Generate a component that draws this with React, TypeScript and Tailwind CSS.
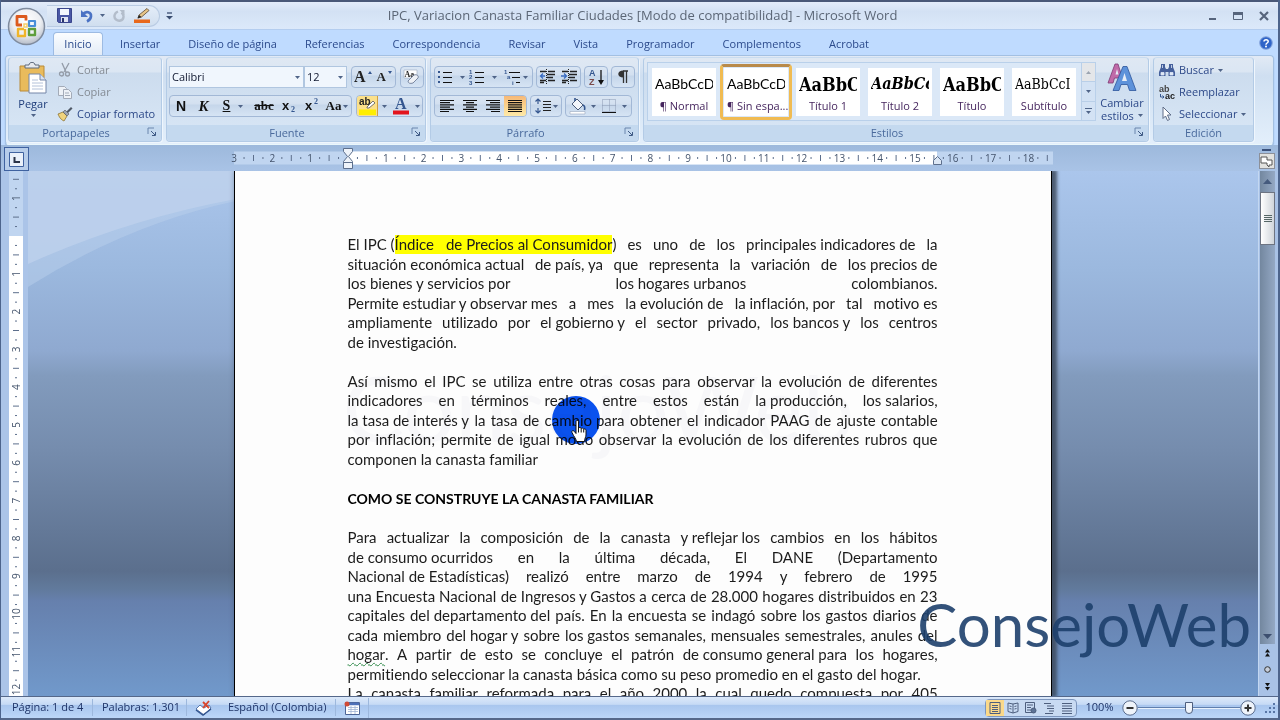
import React from "react";

type Kids = { children?: React.ReactNode };

const TABS = [
  "Insertar",
  "Diseño de página",
  "Referencias",
  "Correspondencia",
  "Revisar",
  "Vista",
  "Programador",
  "Complementos",
  "Acrobat",
];

const STYLES = [
  { name: "¶ Normal", sample: "AaBbCcDc", look: "font-[Lato] text-sm", on: false },
  { name: "¶ Sin espa...", sample: "AaBbCcDc", look: "font-[Lato] text-sm", on: true },
  { name: "Título 1", sample: "AaBbC", look: "font-[DejaVu_Serif_Condensed,DejaVu_Serif] font-bold text-[18px]", on: false },
  { name: "Título 2", sample: "AaBbCc", look: "font-[DejaVu_Serif_Condensed,DejaVu_Serif] font-bold italic text-base", on: false },
  { name: "Título", sample: "AaBbC", look: "font-[DejaVu_Serif_Condensed,DejaVu_Serif] font-bold text-[18px]", on: false },
  { name: "Subtítulo", sample: "AaBbCcI", look: "font-[DejaVu_Serif_Condensed,DejaVu_Serif] text-sm", on: false },
];

// Each string is one justified line; "|" marks the stretchable gaps.
const PARAGRAPH_1 = [
  "situación económica actual|de país, ya|que|representa|la|variación|de|los precios de",
  "los bienes y servicios por|los hogares urbanos|colombianos.",
  "Permite estudiar y observar mes|a|mes|la evolución de|la inflación, por|tal|motivo es",
  "ampliamente|utilizado|por|el gobierno y|el|sector|privado,|los bancos y|los|centros",
];
const PARAGRAPH_2 = [
  "Así|mismo|el|IPC|se|utiliza|entre|otras|cosas|para|observar|la|evolución|de|diferentes",
  "indicadores|en|términos|reales,|entre|estos|están|la producción,|los salarios,",
  "la tasa de interés y|la|tasa|de|cambio para|obtener|el|indicador|PAAG|de|ajuste|contable",
  "por|inflación;|permite|de|igual|modo|observar|la|evolución|de|los|diferentes|rubros|que",
];
const PARAGRAPH_3 = [
  "Para|actualizar|la|composición|de|la|canasta|y reflejar los|cambios|en|los|hábitos",
  "de consumo ocurridos|en|la|última|década,|El|DANE|(Departamento",
  "Nacional de Estadísticas)|realizó|entre|marzo|de|1994|y|febrero|de|1995",
  "una Encuesta Nacional|de Ingresos y Gastos a|cerca|de|28.000|hogares|distribuidos|en|23",
  "capitales|del departamento del|país.|En|la|encuesta|se|indagó|sobre|los|gastos|diarios|de",
  "cada|miembro|del hogar y|sobre|los gastos|semanales,|mensuales|semestrales,|anules|del",
];

function Chunks({ text }: { text: string }) {
  return (
    <>
      {text.split("|").map((c, i) => (
        <React.Fragment key={i}>
          {i > 0 && " "}
          <span className="inline-block whitespace-nowrap">{c}</span>
        </React.Fragment>
      ))}
    </>
  );
}

function Line({ children }: Kids) {
  return <span className="block whitespace-normal [text-align-last:justify]">{children}</span>;
}

function Caret({ className = "" }: { className?: string }) {
  return (
    <svg width="5" height="3" viewBox="0 0 5 3" className={`shrink-0 ${className}`} aria-hidden="true">
      <path d="M0 0h5L2.5 3z" fill="#4f6488" />
    </svg>
  );
}

function Launcher({ label }: { label: string }) {
  return (
    <button aria-label={label} className="absolute right-1 top-0.5">
      <svg width="10" height="10" viewBox="0 0 10 10" fill="none">
        <path d="M1 7V1h6" stroke="#6b86ad" />
        <path d="M4 4l4 4M8.500 5v3.500H5" stroke="#3f5a85" />
      </svg>
    </button>
  );
}

function Group({ title, width, launcher = true, children }: Kids & { title: string; width: string; launcher?: boolean }) {
  return (
    <section
      aria-label={title}
      className={`${width} flex shrink-0 flex-col overflow-hidden rounded-sm border border-[#b3cbe6] border-t-[#c9dcf0] bg-[linear-gradient(#dfe8f3_0,#dbe6f3_14px,#ccdcee_15px,#d9e7f6_100%)] shadow-[1px_1px_0_#eff6fd]`}
    >
      <div className="flex h-[68px]">{children}</div>
      <div className={`relative flex flex-1 items-center justify-center bg-[#c4d9ef] text-[#4a6a9c] ${launcher ? "pr-[18px]" : ""}`}>
        {title}
        {launcher && <Launcher label={`Opciones de ${title}`} />}
      </div>
    </section>
  );
}

function Box({ children, className = "" }: Kids & { className?: string }) {
  return (
    <div
      className={`flex h-[22px] items-stretch overflow-hidden rounded-sm border border-[#a2b8d6] bg-[linear-gradient(#d9e5f3_0,#d3e0f0_40%,#c5d6ea_45%,#d6e4f4_100%)] ${className}`}
    >
      {children}
    </div>
  );
}

function Tool({ label, children, className = "flex-1" }: Kids & { label: string; className?: string }) {
  return (
    <button aria-label={label} title={label} className={`flex items-center justify-center gap-0.5 ${className}`}>
      {children}
    </button>
  );
}

function Combo({ label, value, width }: { label: string; value: string; width: string }) {
  return (
    <label className={`relative flex ${width}`}>
      <span className="sr-only">{label}</span>
      <select
        className="h-[22px] w-full appearance-none border border-[#b0c6e0] bg-[#f0f6fd] px-0.5 text-[11px] text-[#101830]"
        defaultValue={value}
      >
        <option>{value}</option>
      </select>
      <Caret className="pointer-events-none absolute right-1 top-2.5" />
    </label>
  );
}

function AlignIcon({ rows, xs }: { rows: number[]; xs: number[] }) {
  return (
    <svg width="16" height="14" viewBox="0 0 16 14" aria-hidden="true">
      {rows.map((w, i) => (
        <path key={i} d={`M${xs[i]} ${1.5 + i * 2.2}h${w}`} stroke="#111" strokeWidth="1.2" />
      ))}
    </svg>
  );
}

function ListIcon({ kind }: { kind: "bullet" | "number" | "multi" }) {
  return (
    <svg width="17" height="16" viewBox="0 0 17 16" aria-hidden="true">
      {kind === "bullet" && (
        <>
          <path d="M6 3.500h9M6 8.500h9M6 13.500h9" stroke="#111" />
          <path d="M1 2h2v2H1zM1 7h2v2H1zM1 12h2v2H1z" fill="#34568f" />
        </>
      )}
      {kind === "number" && (
        <>
          <path d="M6 3.500h9M6 8.500h9M6 13.500h9" stroke="#111" />
          <g fill="#34568f" fontSize="6" fontWeight="bold" fontFamily="Liberation Sans">
            <text x="0" y="5">1</text>
            <text x="0" y="10">2</text>
            <text x="0" y="15.500">3</text>
          </g>
        </>
      )}
      {kind === "multi" && (
        <>
          <path d="M5 3.500h11M8 8.500h8M12 13.500h4" stroke="#111" />
          <g fill="#34568f" fontSize="6" fontWeight="bold" fontFamily="Liberation Sans">
            <text x="0" y="5">1</text>
            <text x="3" y="10">a</text>
            <text x="8" y="15.500">i</text>
          </g>
        </>
      )}
    </svg>
  );
}

function IndentIcon({ out }: { out?: boolean }) {
  return (
    <svg width="17" height="16" viewBox="0 0 17 16" aria-hidden="true">
      <path d="M1 2.500h6M9 2.500h7M8 5.500h8M8 8.500h6M1 11.500h6M9 11.500h7M1 13.500h4" stroke="#222" strokeWidth="1.300" />
      <path d="M7.500 0v16" stroke="#222" strokeDasharray="1 1" />
      <path d={out ? "M6 7H2M4 4.500L1.500 7 4 9.500" : "M0 7h5M3 4.500L5.500 7 3 9.500"} stroke="#3a6cc0" strokeWidth="1.300" fill="none" />
    </svg>
  );
}

function TitleBar() {
  return (
    <header className="relative flex h-[30px] shrink-0 items-center border-b border-[#b4cdef] border-t-2 border-t-[#4a5878] bg-[linear-gradient(#e3ecfa_0,#d3e1f4_35%,#dce9fa_100%)] pl-[46px]">
      <div className="flex h-[22px] items-center gap-2 rounded-r-full border border-l-0 border-[#b9cbe3] bg-[linear-gradient(#e4edf9,#d0deef)] pl-2.5 pr-2">
        <button aria-label="Guardar">
          <svg width="15" height="15" viewBox="0 0 15 15">
            <path d="M.5.5h14v14h-13l-1-1z" fill="#4a57a5" stroke="#39458c" />
            <path d="M3 1h9v6H3z" fill="#f4f7fd" />
            <path d="M4 9h7v5H4z" fill="#dfe4f2" />
            <path d="M5 10h2v4H5z" fill="#29346d" />
          </svg>
        </button>
        <button aria-label="Deshacer" className="flex items-center gap-1.5">
          <svg width="14" height="14" viewBox="0 0 14 14" fill="none">
            <path d="M2.500 5.500C6 1.500 11.500 3 11 7.500c-.3 2.500-2 4-4 5" stroke="#4a72c4" strokeWidth="2.600" />
            <path d="M1 1v7h7z" fill="#4a72c4" />
          </svg>
          <Caret />
        </button>
        <button aria-label="Rehacer">
          <svg width="13" height="14" viewBox="0 0 13 14" fill="none">
            <path d="M5 2.500C1 4 .5 8.500 3 10.500s7 1.500 7.500-2.500c.2-2-.8-3.500-2-4.500" stroke="#b3bdcb" strokeWidth="2.400" />
            <path d="M6.500 1h5v5z" fill="#b3bdcb" />
          </svg>
        </button>
        <button aria-label="Resaltar">
          <svg width="17" height="16" viewBox="0 0 17 16">
            <path d="M0 11.500h16V15H0z" fill="#e8681c" />
            <path d="M4 10l1-3 8-6.500 2 2L7.500 9z" fill="#e7c588" stroke="#5a4630" strokeWidth=".8" />
            <path d="M3.500 10.500L5 7l2.500 2z" fill="#222" />
          </svg>
        </button>
      </div>
      <button aria-label="Personalizar barra" className="ml-1.5">
        <svg width="7" height="8" viewBox="0 0 7 8">
          <path d="M1 1h5" stroke="#3a4d70" strokeWidth="1.300" />
          <path d="M0 4h7L3.500 7.500z" fill="#3a4d70" />
        </svg>
      </button>
      <h1 className="flex-1 pr-24 text-center text-[13px] text-[#5b6676]">
        IPC, Variacion Canasta Familiar Ciudades [Modo de compatibilidad] - Microsoft Word
      </h1>
      <div className="flex w-[70px] items-center gap-4 text-[#56647c]">
        <button aria-label="Minimizar">
          <svg width="9" height="10" viewBox="0 0 9 10"><path d="M1 8h7" stroke="currentColor" strokeWidth="2" /></svg>
        </button>
        <button aria-label="Restaurar">
          <svg width="10" height="10" viewBox="0 0 10 10"><path d="M.5 2h9v6.500h-9z" fill="none" stroke="currentColor" /><path d="M0 2.500h10" stroke="currentColor" strokeWidth="3" /></svg>
        </button>
        <button aria-label="Cerrar">
          <svg width="10" height="10" viewBox="0 0 10 10"><path d="M1 1l8 8M9 1L1 9" stroke="currentColor" strokeWidth="2.200" /></svg>
        </button>
      </div>
    </header>
  );
}

function OfficeButton() {
  return (
    <button aria-label="Botón de Office" className="absolute left-[6px] top-[7px]">
      <svg width="39" height="39" viewBox="0 0 39 39" fill="none">
        <defs>
          <radialGradient id="orb" cx=".5" cy=".35" r=".65">
            <stop offset="0" stopColor="#fff" />
            <stop offset=".6" stopColor="#eceef2" />
            <stop offset="1" stopColor="#b5bcc8" />
          </radialGradient>
        </defs>
        <circle cx="19.500" cy="19.500" r="18" fill="url(#orb)" stroke="#7f8b9e" strokeWidth="1.500" />
        <path d="M15 18H10V9.500h9v4" stroke="#dc5a1e" strokeWidth="2.800" strokeLinejoin="round" />
        <path d="M22 18v-4h6v5h-6z" stroke="#4a8fd8" strokeWidth="2.200" strokeLinejoin="round" />
        <path d="M17 22h-6v7h7v-7" stroke="#f0b428" strokeWidth="2.400" strokeLinejoin="round" />
        <path d="M22 22h6v6h-6z" stroke="#5f9e3c" strokeWidth="2.400" strokeLinejoin="round" />
        <path d="M17 17h3v3h-3z" stroke="#f6cf6a" strokeWidth="1.500" />
      </svg>
    </button>
  );
}

function TabStrip() {
  return (
    <nav className="flex h-[25px] shrink-0 items-end bg-[#bfdbff] pl-[52px] pr-[5px] text-[#2b4a8c]">
      <a href="#inicio" className="flex h-[23px] w-[50px] items-center justify-center rounded-t-sm border border-b-0 border-[#9dbbe3] bg-[linear-gradient(#fbfdff,#e3ecf7)]">
        Inicio
      </a>
      <div className="flex h-[23px] flex-1 items-center pl-[3px]">
        {TABS.map((t) => (
          <a key={t} href="#tab" className="px-3.5 pt-0.5 whitespace-nowrap">
            {t}
          </a>
        ))}
      </div>
      <button aria-label="Ayuda" className="self-center">
        <svg width="14" height="14" viewBox="0 0 14 14">
          <circle cx="7" cy="7" r="6.300" fill="#2f64c8" stroke="#8aa8dc" />
          <path d="M5 5.500C5 3 9.200 3 9.200 5.500 9.200 7 7 7 7 8.700" stroke="#fff" strokeWidth="1.500" fill="none" />
          <circle cx="7" cy="10.600" r="1" fill="#fff" />
        </svg>
      </button>
    </nav>
  );
}

function ClipboardGroup() {
  return (
    <Group title="Portapapeles" width="w-[154px]">
      <button className="flex w-[48px] flex-col items-center pt-1 text-[#1e3d7a]">
        <svg width="28" height="32" viewBox="0 0 28 32">
          <path d="M1 4h24v25H1z" fill="#e9bb5c" stroke="#b98a36" />
          <path d="M6 6V3h4c0-3.500 6-3.500 6 0h4v3z" fill="#e6e9ee" stroke="#5e6a7c" />
          <path d="M10 12h11l6 6v13H10z" fill="#fff" stroke="#7486a8" />
          <path d="M21 12v6h6" fill="#d9e3f2" stroke="#7486a8" />
          <path d="M13 18h6M13 21h11M13 24h11M13 27h11" stroke="#b4c2d9" />
        </svg>
        <span className="mt-0.5 leading-4">Pegar</span>
        <Caret className="mt-0.5" />
      </button>
      <div className="flex flex-col items-start pt-px text-[#848b94]">
        <button className="flex h-[22px] items-center gap-1">
          <svg width="16" height="16" viewBox="0 0 16 16" fill="none" stroke="#949ca8" strokeWidth="1.300">
            <path d="M5 1l4 9M12 1L7 10" />
            <circle cx="4.500" cy="12" r="2" />
            <circle cx="10.500" cy="12" r="2" />
          </svg>
          Cortar
        </button>
        <button className="flex h-[22px] items-center gap-1">
          <svg width="16" height="16" viewBox="0 0 16 16" fill="#eef2f7" stroke="#a3abb8">
            <path d="M1.500 2.500h6l2 2v7h-8z" />
            <path d="M6.500 5.500h5l3 3v6h-8zM8 9h4M8 11.500h5" />
          </svg>
          Copiar
        </button>
        <button className="flex h-[22px] items-center gap-1 whitespace-nowrap text-[#2c4888]">
          <svg width="16" height="16" viewBox="0 0 16 16">
            <path d="M1 8l5-2 4 4-3 5c-2-1-4-2-6-7z" fill="#f0d37c" stroke="#8d7433" strokeWidth=".8" />
            <path d="M6 6l2-2 4 4-2 2z" fill="#9ba4b2" stroke="#555" strokeWidth=".6" />
            <path d="M9.500 5.500L14 1l1.500 1.500L11 7z" fill="#4f5866" />
          </svg>
          Copiar formato
        </button>
      </div>
    </Group>
  );
}

function FontGroup() {
  return (
    <Group title="Fuente" width="w-[260px]">
      <div className="flex flex-1 flex-col gap-[7px] px-0.5 pt-2">
        <div className="flex gap-1">
          <div className="flex">
            <Combo label="Fuente" value="Calibri" width="w-[135px]" />
            <Combo label="Tamaño" value="12" width="w-[43px]" />
          </div>
          <Box className="w-[45px] font-['Liberation_Serif'] font-bold text-[#222]">
            <Tool label="Agrandar fuente">
              <span className="text-base">A</span>
              <svg width="4" height="4" viewBox="0 0 4 4" className="mb-2"><path d="M0 3h4L2 0z" fill="#34568f" /></svg>
            </Tool>
            <Tool label="Encoger fuente">
              <span className="text-[13px]">A</span>
              <svg width="4" height="4" viewBox="0 0 4 4" className="mb-2"><path d="M0 0h4L2 3z" fill="#34568f" /></svg>
            </Tool>
          </Box>
          <Box className="w-[24px]">
            <Tool label="Borrar formato">
              <svg width="18" height="18" viewBox="0 0 18 18">
                <path d="M1 2h13v8H1z" fill="#fff" stroke="#9aa7bd" strokeWidth=".6" />
                <text x="1.500" y="9" fontSize="8" fontWeight="bold" fontFamily="Liberation Serif" fill="#222">Aa</text>
                <path d="M5 13l6-6c3-1 5 1 4 3l-5 5c-3 1-5 0-5-2z" fill="#eef1f6" stroke="#5f6f8c" strokeWidth=".8" />
              </svg>
            </Tool>
          </Box>
        </div>
        <div className="flex gap-1">
          <Box className="w-[183px] font-['Liberation_Serif'] font-bold text-[#111]">
            <Tool label="Negrita" className="w-[22px]"><span className="font-['Liberation_Sans'] text-sm">N</span></Tool>
            <Tool label="Cursiva" className="w-[23px]"><span className="text-[15px] italic">K</span></Tool>
            <Tool label="Subrayado" className="w-[36px] gap-2"><span className="text-sm underline">S</span><Caret /></Tool>
            <Tool label="Tachado" className="w-[26px]"><span className="text-[13px] line-through">abc</span></Tool>
            <Tool label="Subíndice" className="w-[23px] gap-0"><span className="font-['Liberation_Sans'] text-[13px]">x</span><span className="self-end text-[8px] text-[#34568f]">2</span></Tool>
            <Tool label="Superíndice" className="w-[23px] gap-0"><span className="font-['Liberation_Sans'] text-[13px]">x</span><span className="self-start text-[8px] text-[#34568f]">2</span></Tool>
            <Tool label="Mayúsculas" className="w-[28px]"><span className="text-[13px]">Aa</span><Caret /></Tool>
          </Box>
          <Box className="w-[67px]">
            <button aria-label="Color de resaltado" className="flex w-[21px] items-center justify-center border-r border-[#d0a040] bg-[#fbe08a]">
              <svg width="19" height="20" viewBox="0 0 19 20">
                <path d="M1 13.500h17V19H1z" fill="#ffee00" />
                <text x="1" y="9" fontSize="10" fontWeight="bold" fontFamily="Liberation Sans" fill="#222">ab</text>
                <path d="M9 11l6-6 2 2-6 5H9z" fill="#fff" stroke="#555" strokeWidth=".8" />
              </svg>
            </button>
            <Tool label="Opciones de resaltado" className="w-3"><Caret /></Tool>
            <Tool label="Color de fuente">
              <svg width="16" height="20" viewBox="0 0 16 20">
                <text x="2" y="13" fontSize="16" fontWeight="bold" fontFamily="Liberation Serif" fill="#34568f">A</text>
                <path d="M0 14.500h16v4H0z" fill="#e3141c" />
              </svg>
              <Caret className="ml-1" />
            </Tool>
          </Box>
        </div>
      </div>
    </Group>
  );
}

function ParagraphGroup() {
  return (
    <Group title="Párrafo" width="w-[209px]">
      <div className="flex flex-1 flex-col gap-[7px] px-[3px] pt-2">
        <div className="flex gap-[3px]">
          <Box className="w-[99px]">
            <Tool label="Viñetas"><ListIcon kind="bullet" /><Caret className="ml-1" /></Tool>
            <Tool label="Numeración"><ListIcon kind="number" /><Caret className="ml-1" /></Tool>
            <Tool label="Lista multinivel"><ListIcon kind="multi" /><Caret /></Tool>
          </Box>
          <Box className="w-[45px]">
            <Tool label="Disminuir sangría"><IndentIcon out /></Tool>
            <Tool label="Aumentar sangría"><IndentIcon /></Tool>
          </Box>
          <Box className="w-[24px]">
            <Tool label="Ordenar">
              <svg width="17" height="18" viewBox="0 0 17 18">
                <text x="1" y="8" fontSize="9" fontWeight="bold" fontFamily="Liberation Sans" fill="#34568f">A</text>
                <text x="1" y="17" fontSize="9" fontWeight="bold" fontFamily="Liberation Sans" fill="#7a4a4a">Z</text>
                <path d="M13 2v12" stroke="#111" strokeWidth="1.300" />
                <path d="M10 12h6l-3 5z" fill="#111" />
              </svg>
            </Tool>
          </Box>
          <Box className="w-[24px]">
            <Tool label="Mostrar todo">
              <svg width="12" height="14" viewBox="0 0 12 14">
                <path d="M6 1h5M6.500 1v12M9.500 1v12" stroke="#333" strokeWidth="1.300" fill="none" />
                <path d="M6.500.5v7C-.5 7.500-.5.5 6.500.5z" fill="#333" />
              </svg>
            </Tool>
          </Box>
        </div>
        <div className="flex gap-[3px]">
          <Box className="w-[93px]">
            <Tool label="Alinear a la izquierda"><AlignIcon rows={[14, 10, 14, 10, 14, 9]} xs={[1, 1, 1, 1, 1, 1]} /></Tool>
            <Tool label="Centrar"><AlignIcon rows={[14, 8, 14, 8, 14, 8]} xs={[1, 4, 1, 4, 1, 4]} /></Tool>
            <Tool label="Alinear a la derecha"><AlignIcon rows={[14, 10, 14, 10, 14, 9]} xs={[1, 5, 1, 5, 1, 6]} /></Tool>
            <button aria-label="Justificar" className="flex w-[22px] items-center justify-center bg-[linear-gradient(#f6b877,#fbd38d_50%,#fde9a8)]">
              <AlignIcon rows={[14, 14, 14, 14, 14, 14]} xs={[1, 1, 1, 1, 1, 1]} />
            </button>
          </Box>
          <Box className="w-[32px]">
            <Tool label="Interlineado">
              <svg width="16" height="16" viewBox="0 0 16 16">
                <path d="M8 3.500h8M8 6.500h8M8 9.500h8M8 12.500h8" stroke="#222" strokeWidth="1.200" />
                <path d="M3 1v5M3 10v5M.5 3.500L3 1l2.500 2.500M.5 12.500L3 15l2.500-2.500" stroke="#34568f" strokeWidth="1.200" fill="none" />
              </svg>
              <Caret />
            </Tool>
          </Box>
          <Box className="w-[67px]">
            <Tool label="Sombreado">
              <svg width="18" height="18" viewBox="0 0 18 18">
                <path d="M3 7l5-5 6 6-5 5z" fill="#f3f6fb" stroke="#4b5c7a" />
                <path d="M6 4V1M14 8c2 1 2 3 1.500 5" stroke="#34568f" strokeWidth="1.600" fill="none" />
                <path d="M1 14.500h15v2.500H1z" fill="#fff" stroke="#98a6bd" strokeWidth=".6" />
              </svg>
              <Caret className="ml-0.5" />
            </Tool>
            <Tool label="Bordes">
              <svg width="14" height="15" viewBox="0 0 14 15">
                <path d="M.5.5h13v12H.5zM7.500 .5v12M.5 6.500h13" fill="none" stroke="#8a98b2" strokeDasharray="1 1" />
                <path d="M0 13.500h14" stroke="#111" />
              </svg>
              <Caret className="ml-1" />
            </Tool>
          </Box>
        </div>
      </div>
    </Group>
  );
}

function StylesGroup() {
  return (
    <Group title="Estilos" width="w-[506px]">
      <div className="my-1 ml-[3px] flex h-[59px] w-[449px] border border-[#b9d0ea] bg-[#dbe8f7]">
        <div className="flex flex-1">
          {STYLES.map((s) => (
            <button
              key={s.name}
              className={
                s.on
                  ? "mt-px flex h-[56px] w-[72px] rounded-sm border-[3px] border-[#f0bb52] border-t-[#b98a4a] p-px"
                  : "mt-px flex h-[56px] w-[72px] p-1"
              }
            >
              <span className="flex h-full w-full flex-col bg-white px-[3px] pt-1">
                <span className={`flex h-6 items-center overflow-hidden whitespace-nowrap text-black ${s.look}`}>{s.sample}</span>
                <span className="whitespace-nowrap text-center leading-5 text-[#46265e]">{s.name}</span>
              </span>
            </button>
          ))}
        </div>
        <div className="flex w-3.5 flex-col divide-y divide-[#b9cfe8] border-l border-[#b9cfe8] bg-[#d3e2f4]">
          <button aria-label="Estilos anteriores" className="flex flex-1 items-center justify-center bg-[#e4e6e9]">
            <svg width="5" height="3" viewBox="0 0 5 3"><path d="M0 3h5L2.500 0z" fill="#9ba4b0" /></svg>
          </button>
          <button aria-label="Estilos siguientes" className="flex flex-1 items-center justify-center"><Caret /></button>
          <button aria-label="Más estilos" className="flex flex-1 flex-col items-center justify-center gap-0.5">
            <span className="h-px w-[7px] bg-[#4f6488]" />
            <Caret />
          </button>
        </div>
      </div>
      <button className="flex flex-1 flex-col items-center pt-[5px] text-[#2c4888]">
        <svg width="30" height="29" viewBox="0 0 30 29">
          <path d="M1 20h5l1.500-5h5l1.500 5h3L11 1H8z" fill="#c06aa8" stroke="#7d3a74" strokeWidth=".8" />
          <path d="M8.500 11.500h3L10 6z" fill="#e5ecf6" />
          <path d="M6 27.500h6l2-6h6.500l2 6H29L20 3.500h-4z" fill="#5d92da" stroke="#2d559c" strokeWidth=".8" />
          <path d="M15 18h5l-2.500-8z" fill="#e5ecf6" />
        </svg>
        <span className="mt-1 leading-[13px]">Cambiar</span>
        <span className="flex items-center gap-1 leading-[13px]">estilos <Caret /></span>
      </button>
    </Group>
  );
}

function EditGroup() {
  return (
    <Group title="Edición" width="w-[101px]" launcher={false}>
      <div className="flex flex-col items-start pl-[5px] pt-px text-[#2c4888]">
        <button className="flex h-[22px] items-center gap-1">
          <svg width="16" height="14" viewBox="0 0 16 14">
            <path d="M2 1h4v3l1 2h2l1-2V1h4v3l2 5v4H9.500V9h-3v4H0V9l2-5z" fill="#45609c" />
            <path d="M2 9.500h3V12H2zM11 9.500h3V12h-3zM3.500 2v3M12.500 2v3" fill="#dfe9f7" stroke="#dfe9f7" strokeWidth=".8" />
          </svg>
          Buscar <Caret />
        </button>
        <button className="flex h-[22px] items-center gap-1">
          <svg width="16" height="16" viewBox="0 0 16 16">
            <text x="0" y="8" fontSize="9" fontWeight="bold" fontFamily="Liberation Sans" fill="#444">ab</text>
            <text x="6" y="15" fontSize="9" fontWeight="bold" fontFamily="Liberation Sans" fill="#222">ac</text>
            <path d="M1.500 10v3H5M3.500 11.500L5 13l-1.500 1.500" stroke="#34568f" fill="none" />
          </svg>
          Reemplazar
        </button>
        <button className="flex h-[22px] items-center gap-1 whitespace-nowrap">
          <svg width="16" height="16" viewBox="0 0 16 16">
            <path d="M4 1l8 8H8.500l2 4.500-2 1L6.500 10 4 12.500z" fill="#fff" stroke="#5e6d88" />
          </svg>
          Seleccionar <Caret />
        </button>
      </div>
    </Group>
  );
}

function Ribbon() {
  return (
    <div className="mx-1 flex h-[90px] shrink-0 gap-1 rounded border border-[#a3c0e2] border-b-[#eaf7fb] bg-[linear-gradient(#e2eaf5_0,#cfdff1_20px,#e3effb_100%)] px-0.5 pb-0.5 pt-px shadow-[0_1px_1px_#7f9fc6]">
      <ClipboardGroup />
      <FontGroup />
      <ParagraphGroup />
      <StylesGroup />
      <EditGroup />
    </div>
  );
}

const CM = 37.8;

function HorizontalRuler() {
  const marks: React.ReactNode[] = [];
  for (let q = -11; q <= 74; q++) {
    const x = 114 + (q * CM) / 4;
    if (q % 4 === 0) {
      if (q !== 0) {
        marks.push(
          <text key={q} x={x} y="10.500" textAnchor="middle" fontSize="10" fontFamily="Open Sans" fill="#44546c">
            {Math.abs(q / 4)}
          </text>,
        );
      }
    } else {
      const tall = q % 2 === 0;
      marks.push(<path key={q} d={tall ? `M${x} 4v6` : `M${x} 6v2`} stroke="#5d6f8c" />);
    }
  }
  return (
    <svg width="820" height="20" viewBox="0 0 820 20" className="shrink-0 overflow-visible" aria-label="Regla horizontal">
      <path d="M0 .5h819v13H0z" fill="#c0d5f0" />
      <path d="M114 .5h589v13H114z" fill="#fff" />
      <text x="0" y="10.500" textAnchor="middle" fontSize="10" fontFamily="Open Sans" fill="#44546c">3</text>
      {marks}
      <path d="M109.500-2.500h9v3l-4 5 4 5v7h-9v-7l4-5-4-5zM109.500 11.500h9" fill="#eef3fa" stroke="#5d6f8c" />
      <path d="M699.500 13.500v-4l4-4 4 4v4z" fill="#dce7f5" stroke="#5d6f8c" />
    </svg>
  );
}

function VerticalRuler() {
  const marks: React.ReactNode[] = [];
  for (let q = -6; q <= 49; q++) {
    const y = 65 + (q * CM) / 4;
    if (q % 4 === 0) {
      if (q !== 0) {
        marks.push(
          <text
            key={q}
            x="16"
            y={y}
            transform={`rotate(-90 16 ${y})`}
            textAnchor="middle"
            dy="4"
            fontSize="10"
            fontFamily="Open Sans"
            fill="#44546c"
          >
            {Math.abs(q / 4)}
          </text>,
        );
      }
    } else {
      const wide = q % 2 === 0;
      marks.push(<path key={q} d={wide ? `M13 ${y}h6` : `M15 ${y}h2`} stroke="#5d6f8c" />);
    }
  }
  return (
    <svg width="27" height="525" viewBox="1 0 27 525" className="shrink-0" aria-label="Regla vertical">
      <path d="M9 0h14v65H9z" fill="#c0d5f0" />
      <path d="M9 65h14v460H9z" fill="#fff" />
      {marks}
    </svg>
  );
}

function RulerRow() {
  return (
    <div className="flex h-[26px] shrink-0 items-start bg-[linear-gradient(#9db9dc,#a9c3e6)] pl-[3px]">
      <button aria-label="Tabulación izquierda" className="mt-0.5 flex h-6 w-[25px] items-center justify-center border border-[#3f62a0] bg-[#b7cdea]">
        <svg width="15" height="15" viewBox="0 0 15 15">
          <path d="M.5.5h14v14H.5z" fill="#e9f0fa" stroke="#3f62a0" />
          <path d="M5.500 5v5H11" stroke="#2a3348" strokeWidth="2" fill="none" />
        </svg>
      </button>
      <div className="flex flex-1 justify-center pl-1 pt-1.5">
        <HorizontalRuler />
      </div>
      <div className="flex w-[23px] flex-col items-center gap-0.5 pt-1">
        <span className="h-0.5 w-[9px] bg-[#3b517a]" />
        <button aria-label="Regla" className="flex h-4 w-4 items-center justify-center border border-[#8c9099] bg-[#e2e2df]">
          <svg width="13" height="13" viewBox="0 0 13 13">
            <path d="M1 2h6v3h5v5H9v2L7 10V8H1z" fill="#fff" stroke="#555" />
          </svg>
        </button>
      </div>
    </div>
  );
}

function DocumentPage() {
  return (
    <article className="relative h-full w-[818px] shrink-0 overflow-hidden border-x border-black bg-[#fdfdfd] shadow-[4px_0_3px_1px_rgba(60,72,90,0.8),0_0_5px_rgba(60,72,90,0.4)]">
      <p aria-hidden="true" className="absolute left-[108px] top-[176px] font-[Lato] text-[92px] leading-[120px] text-[#f7f7f9]">
        ConsejoWeb
      </p>
      <div className="relative mx-[113px] mt-16 grid h-[469px] auto-rows-fr content-start font-[Lato] text-[15px] leading-[19px] text-[#1c1c1c] [font-variant-ligatures:none]">
        <Line>
          <Chunks text="El IPC (" />
          <mark className="inline-block whitespace-nowrap bg-[#ffff00] text-inherit">
            Índice<span className="pl-3">de Precios al Consumidor</span>
          </mark>
          <Chunks text=")|es|uno|de|los|principales indicadores de|la" />
        </Line>
        {PARAGRAPH_1.map((t) => <Line key={t}><Chunks text={t} /></Line>)}
        <span>de investigación.</span>
        <span />
        {PARAGRAPH_2.map((t) => <Line key={t}><Chunks text={t} /></Line>)}
        <span>componen la canasta familiar</span>
        <span />
        <h2 className="whitespace-nowrap text-sm font-bold leading-5 text-black">COMO SE CONSTRUYE LA CANASTA FAMILIAR</h2>
        <span />
        {PARAGRAPH_3.map((t) => <Line key={t}><Chunks text={t} /></Line>)}
        <Line>
          <span className="underline decoration-[#2f8a4a] decoration-wavy decoration-1 underline-offset-2">hogar</span>
          <Chunks text=".|A|partir|de|esto|se|concluye|el|patrón|de consumo general para|los|hogares," />
        </Line>
        <span className="whitespace-nowrap">permitiendo seleccionar la canasta básica como su peso promedio en el gasto del hogar.</span>
        <Line><Chunks text="La|canasta|familiar|reformada|para|el|año|2000|la|cual|quedo|compuesta|por|405" /></Line>
      </div>
    </article>
  );
}

function ScrollBar() {
  return (
    <div className="flex w-5 shrink-0 flex-col items-center border-l border-[#c3d7f1] bg-[#a9c2e6] pr-0.5">
      <div className="flex w-[15px] flex-1 flex-col items-center bg-[linear-gradient(90deg,#73879f,#94a8c4)]">
        <button aria-label="Subir" className="flex h-[21px] items-center">
          <svg width="9" height="5" viewBox="0 0 9 5"><path d="M0 5h9L4.500 0z" fill="#455a7d" /></svg>
        </button>
        <div className="flex h-[53px] w-[15px] flex-col items-center justify-center gap-px border border-[#6d7482] bg-[linear-gradient(90deg,#fff,#cfd4da)]">
          <span className="h-px w-2 bg-[#566]" />
          <span className="h-px w-2 bg-[#566]" />
          <span className="h-px w-2 bg-[#566]" />
          <span className="h-px w-2 bg-[#566]" />
        </div>
        <button aria-label="Bajar" className="mt-auto flex h-4 items-center">
          <svg width="9" height="5" viewBox="0 0 9 5"><path d="M0 0h9L4.500 5z" fill="#3d4f6f" /></svg>
        </button>
      </div>
      <div className="flex h-[52px] flex-col items-center justify-around">
        <button aria-label="Página anterior">
          <svg width="7" height="8" viewBox="0 0 7 8"><path d="M1 3.500h5L3.500 0zM1 7.500h5L3.500 4z" fill="#111" /></svg>
        </button>
        <button aria-label="Seleccionar objeto">
          <svg width="7" height="7" viewBox="0 0 7 7"><circle cx="3.500" cy="3.500" r="2.800" fill="#c6cedb" stroke="#333" /></svg>
        </button>
        <button aria-label="Página siguiente">
          <svg width="7" height="8" viewBox="0 0 7 8"><path d="M1 0h5L3.500 3.500zM1 4h5L3.500 7.500z" fill="#111" /></svg>
        </button>
      </div>
    </div>
  );
}

function Workspace() {
  return (
    <main className="flex min-h-0 flex-1 overflow-hidden bg-[#abc4e8]">
      <VerticalRuler />
      <div className="relative flex min-w-0 flex-1 justify-center overflow-hidden bg-[linear-gradient(#abc6ec_0,#9bb8de_100px,#8fa9d0_180px,#829bbd_205px,#758cad_280px,#5b6f8d_400px,#617a9c_418px,#6680ad_430px,#7199cb_525px)] pr-px">
        <svg width="208" height="120" viewBox="0 0 208 120" className="absolute left-0 top-0" aria-hidden="true">
          <path d="M0 0h208v30Q100 53 0 116z" fill="#b9d0ec" opacity=".5" />
          <path d="M0 0h208v28Q100 48 0 93z" fill="#bed1ec" opacity=".8" />
        </svg>
        <DocumentPage />
      </div>
      <ScrollBar />
    </main>
  );
}

function ViewButton({ label, active, children }: Kids & { label: string; active?: boolean }) {
  return (
    <button
      aria-label={label}
      className={active ? "flex w-[18px] items-center justify-center bg-[#fbd98a]" : "flex w-[18px] items-center justify-center"}
    >
      <svg width="12" height="12" viewBox="0 0 12 12" fill="none" stroke="#4e5f7e">
        {children}
      </svg>
    </button>
  );
}

function StatusBar() {
  return (
    <footer className="flex h-6 shrink-0 items-center whitespace-nowrap border-b-2 border-t border-[#55688a] bg-[linear-gradient(#dce9fa_0,#c6daf5_35%,#a9c6ee_40%,#bcd6f8_100%)] text-[#1f3468]">
      <span className="w-[92px] border-r border-[#9db8dd] pl-[11px]">Página: 1 de 4</span>
      <span className="w-[94px] border-r border-[#9db8dd] pl-[9px]">Palabras: 1.301</span>
      <button aria-label="Revisión" className="ml-2">
        <svg width="17" height="16" viewBox="0 0 17 16">
          <path d="M1 9l4-4 4 3 5-3 2 3-7 7z" fill="#fff" stroke="#5877ac" />
          <path d="M1 10l7 5 8-6" stroke="#34568f" strokeWidth="1.500" fill="none" />
          <path d="M8 2l6 6M14 1L8 8" stroke="#d8452c" strokeWidth="1.800" />
        </svg>
      </button>
      <span className="ml-4 w-[108px] border-r border-[#9db8dd]">Español (Colombia)</span>
      <button aria-label="Macros" className="ml-2">
        <svg width="16" height="14" viewBox="0 0 16 14">
          <path d="M1.500 1.500h14v12h-14z" fill="#fff" stroke="#4c6496" />
          <path d="M2 3h13" stroke="#4c6fb8" strokeWidth="2.500" />
          <path d="M4 6.500h10M4 8.500h10M4 10.500h10M7 5v8M11 5v8" stroke="#9fb2d4" strokeWidth=".8" />
          <circle cx="3" cy="3" r="2.500" fill="#d04a36" />
        </svg>
      </button>
      <span className="ml-2 h-5 w-px bg-[#9db8dd]" />
      <div className="ml-auto flex items-center">
        <div className="flex h-[18px] rounded-sm border border-[#7d96bd] bg-[#c8daf2]">
          <ViewButton label="Diseño de impresión" active><path d="M1 .5h10v11H1zM3 3.500h6M3 5.500h6M3 7.500h6M3 9.500h6" /></ViewButton>
          <ViewButton label="Lectura"><path d="M6 2v9L1 9.500V1zM6 2l5-1v8.500L6 11M2.500 4l2 .5M2.500 6.500l2 .5M7.500 4.500l2-.5M7.500 7l2-.5" /></ViewButton>
          <ViewButton label="Diseño web"><path d="M.5.5h9v10h-9zM2 3h6M2 5.500h4M2 8h4" /><circle cx="8.500" cy="8.500" r="2.500" fill="#5d7396" /></ViewButton>
          <ViewButton label="Esquema"><path d="M1 1.500h7M4 4h7M4 6.500h7M6 9h5M2 11.500h8" /></ViewButton>
          <ViewButton label="Borrador"><path d="M1 1.500h10M1 4h10M1 6.500h10M1 9h10M1 11.500h10" /></ViewButton>
        </div>
        <button className="ml-2 w-[29px]">100%</button>
        <button aria-label="Alejar" className="ml-2">
          <svg width="16" height="16" viewBox="0 0 16 16"><circle cx="8" cy="8" r="7.200" fill="#eef3fa" stroke="#5b6d8d" /><path d="M4.500 8h7" stroke="#333" strokeWidth="2" /></svg>
        </button>
        <label className="flex w-[102px] items-center">
          <span className="sr-only">Zoom</span>
          <input
            type="range"
            min="0"
            max="100"
            defaultValue="50"
            className="h-3.5 w-full appearance-none bg-[linear-gradient(transparent_6px,#5f7fae_6px,#5f7fae_7px,#e8f1fc_7px,#e8f1fc_8px,transparent_8px)] [&::-webkit-slider-thumb]:h-3 [&::-webkit-slider-thumb]:w-2 [&::-webkit-slider-thumb]:appearance-none [&::-webkit-slider-thumb]:rounded-b [&::-webkit-slider-thumb]:border [&::-webkit-slider-thumb]:border-[#4e5f7e] [&::-webkit-slider-thumb]:bg-[#eef3fa]"
          />
        </label>
        <button aria-label="Acercar">
          <svg width="16" height="16" viewBox="0 0 16 16"><circle cx="8" cy="8" r="7.200" fill="#eef3fa" stroke="#5b6d8d" /><path d="M4.500 8h7M8 4.500v7" stroke="#333" strokeWidth="2" /></svg>
        </button>
        <svg width="12" height="12" viewBox="0 0 12 12" className="ml-2" fill="#5876a6" aria-hidden="true">
          <path d="M9 1h2v2H9zM9 5h2v2H9zM9 9h2v2H9zM5 5h2v2H5zM5 9h2v2H5zM1 9h2v2H1z" />
        </svg>
        <span className="w-0.5" />
      </div>
    </footer>
  );
}

export default function App() {
  return (
    <div className="relative flex h-screen flex-col overflow-hidden border-l border-r-2 border-[#4d648c] bg-[#bfdbff] font-['Open_Sans',sans-serif] text-[11px]">
      <TitleBar />
      <TabStrip />
      <OfficeButton />
      <Ribbon />
      <RulerRow />
      <Workspace />
      <StatusBar />
      <svg width="48" height="52" viewBox="0 0 48 52" className="pointer-events-none absolute left-[551px] top-[396px] mix-blend-multiply" aria-hidden="true">
        <circle cx="24" cy="24" r="24" fill="#0a52f0" />
      </svg>
      <svg width="17" height="23" viewBox="0 0 17 23" className="pointer-events-none absolute left-[570px] top-[420px]" aria-hidden="true">
        <path
          d="M5 1.500c0-1.300 2.500-1.300 2.500 0V8c.5-.8 2.500-.7 2.700.5.600-.7 2.300-.4 2.500.7.800-.5 2.300-.2 2.300 1V15c0 2-1.500 3.500-1.500 6.500h-8C5 18.500 3 17 1 12.500c-.8-1.800 1.200-2.500 2.200-1.200L5 13.500z"
          fill="#fff"
          stroke="#111"
        />
        <path d="M7.500 8v4.500M10.200 8.500v4M12.700 9.200v3.300" stroke="#111" />
      </svg>
      <p aria-hidden="true" className="pointer-events-none absolute bottom-14 right-[27px] font-[Lato] text-[60px] leading-[80px] text-[#1d3f6b]/90">
        ConsejoWeb
      </p>
    </div>
  );
}
